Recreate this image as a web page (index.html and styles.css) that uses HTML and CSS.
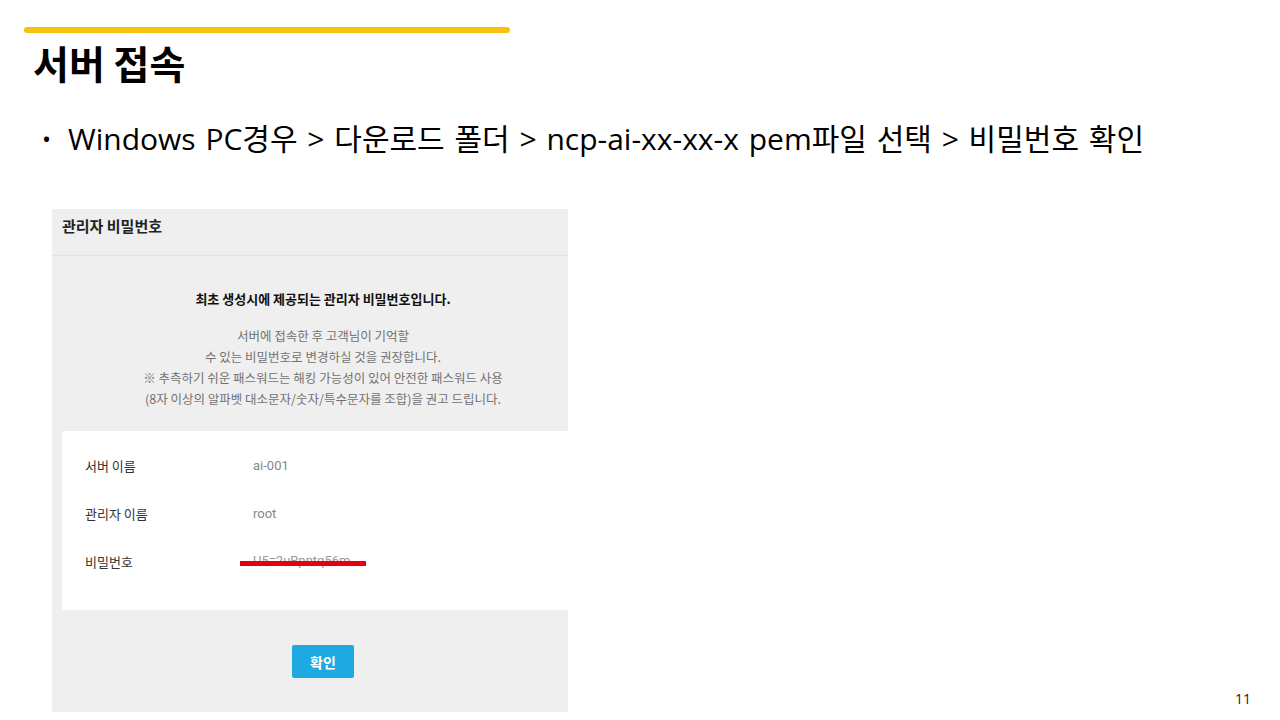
FILE: index.html
```html
<html>
<head>
    <meta charset="utf-8">
    <link rel="stylesheet" href="styles.css">
</head>
<body>

<div class="slide">
  <div class="accent"></div>
  <h1 class="title">서버 접속</h1>

  <ul class="points">
    <li>Windows PC경우 &gt; 다운로드 폴더 &gt; ncp-ai-xx-xx-x pem파일 선택 &gt; 비밀번호 확인</li>
  </ul>

  <div class="shot">
    <div class="dialog">
      <div class="dialog-head">관리자 비밀번호</div>

      <div class="notice">
        <p class="notice-main">최초 생성시에 제공되는 관리자 비밀번호입니다.</p>
        <p class="notice-sub">
          서버에 접속한 후 고객님이 기억할<br>
          수 있는 비밀번호로 변경하실 것을 권장합니다.<br>
          ※ 추측하기 쉬운 패스워드는 해킹 가능성이 있어 안전한 패스워드 사용<br>
          (8자 이상의 알파벳 대소문자/숫자/특수문자를 조합)을 권고 드립니다.
        </p>
      </div>

      <div class="info">
        <div class="row"><span class="label">서버 이름</span><span class="value">ai-001</span></div>
        <div class="row"><span class="label">관리자 이름</span><span class="value">root</span></div>
        <div class="row"><span class="label">비밀번호</span><span class="value secret">U5=2uRpntq56m</span></div>
      </div>

      <div class="actions">
        <button class="ok">확인</button>
      </div>
    </div>
  </div>

  <div class="page-num">11</div>
</div>

</body>
</html>
```

FILE: styles.css
```css
* {
  margin: 0px;
  padding: 0px;
  box-sizing: border-box;
}
body {
  background-color: white;
}
.slide {
  position: relative;
  width: 1280px;
  height: 720px;
  overflow: hidden;
  padding-top: 27px;
  font-family: "Open Sans", "Noto Sans CJK KR", sans-serif;
  color: black;
}
.accent {
  margin-left: 24px;
  width: 486px;
  height: 6px;
  border-radius: 3px;
  background-color: #f8c20c;
}
.title {
  margin-left: 33px;
  margin-top: 4px;
  font-family: "Noto Sans CJK KR", sans-serif;
  font-size: 39px;
  font-weight: bold;
  line-height: 50px;
}
.points {
  list-style: none;
  margin-top: 32px;
  margin-left: 42px;
  font-size: 30px;
  line-height: 40px;
  word-spacing: 2px;
}
.points li:before {
  content: "•";
  display: inline-block;
  width: 26px;
  font-size: 24px;
  vertical-align: top;
}
/* captured console dialog */
.shot {
  margin-left: 52px;
  margin-top: 50px;
  width: 516px;
  height: 503px;
  overflow: hidden;
  background-color: #efefef;
}
.dialog {
  width: 542px;
  font-family: Roboto, "Noto Sans CJK KR", sans-serif;
}
.dialog-head {
  height: 47px;
  padding-top: 6px;
  padding-left: 10px;
  font-family: "Noto Sans CJK KR", sans-serif;
  font-size: 15px;
  font-weight: bold;
  line-height: 22px;
  color: #222;
  border-bottom: 1px solid #e3e3e3;
}
.notice {
  padding-top: 32px;
  padding-bottom: 22px;
  text-align: center;
  font-family: "Noto Sans CJK KR", sans-serif;
}
.notice-main {
  font-size: 13px;
  font-weight: bold;
  line-height: 21px;
  color: #111;
}
.notice-sub {
  margin-top: 16px;
  font-size: 12.5px;
  line-height: 21px;
  color: #727272;
}
.info {
  margin: 0 10px;
  padding: 11px 0 24px 23px;
  background-color: white;
  border-radius: 2px;
}
.row {
  display: flex;
  height: 48px;
  line-height: 48px;
  font-size: 13px;
}
.label {
  width: 168px;
  color: #333;
  font-family: "Noto Sans CJK KR", sans-serif;
}
.value {
  color: #888;
}
.secret {
  position: relative;
  line-height: 30px;
  height: 30px;
  margin-top: 8px;
  color: #999;
}
.secret:after {
  content: "";
  position: absolute;
  left: -13px;
  right: -15px;
  top: 15px;
  height: 5px;
  background-color: #e8000b;
}
.actions {
  margin-top: 35px;
  display: flex;
  justify-content: center;
}
.ok {
  width: 62px;
  height: 33px;
  border: none;
  border-radius: 2px;
  background-color: #1ea9e1;
  color: white;
  font-family: "Noto Sans CJK KR", sans-serif;
  font-size: 14px;
  font-weight: bold;
}
.page-num {
  position: absolute;
  right: 29px;
  bottom: 12px;
  font-size: 14px;
  color: #222;
}
```
